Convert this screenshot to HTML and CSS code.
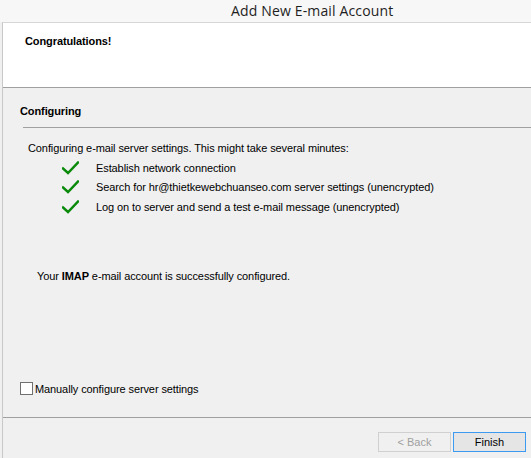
FILE: index.html
```html
<!DOCTYPE html>
<html>
<head>
<meta charset="utf-8">
<link rel="stylesheet" href="styles.css">
</head>
<body>
<div class="titlebar"><span class="title">Add New E-mail Account</span></div>
<div class="window">
  <div class="header">
    <div class="congrats">Congratulations!</div>
  </div>
  <div class="content">
    <div class="section-title">Configuring</div>
    <div class="rule"></div>
    <div class="desc">Configuring e-mail server settings. This might take several minutes:</div>
    <ul class="steps">
      <li><svg class="check" width="17" height="14" viewBox="0 0 17 14"><path d="M1 7.5 L6 12 L16 1.5" fill="none" stroke="#0a8a0a" stroke-width="2.4" stroke-linecap="square"/></svg><span>Establish network connection</span></li>
      <li><svg class="check" width="17" height="14" viewBox="0 0 17 14"><path d="M1 7.5 L6 12 L16 1.5" fill="none" stroke="#0a8a0a" stroke-width="2.4" stroke-linecap="square"/></svg><span>Search for hr@thietkewebchuanseo.com server settings (unencrypted)</span></li>
      <li><svg class="check" width="17" height="14" viewBox="0 0 17 14"><path d="M1 7.5 L6 12 L16 1.5" fill="none" stroke="#0a8a0a" stroke-width="2.4" stroke-linecap="square"/></svg><span>Log on to server and send a test e-mail message (unencrypted)</span></li>
    </ul>
    <div class="result">Your <b>IMAP</b> e-mail account is successfully configured.</div>
    <label class="manual"><span class="box"></span>Manually configure server settings</label>
  </div>
  <div class="footer">
    <button class="btn disabled">&lt; Back</button>
    <button class="btn primary">Finish</button>
  </div>
</div>
</body>
</html>
```
FILE: styles.css
```css
html, body {
  margin: 0;
  padding: 0;
  background: #f0f0f0;
  overflow: hidden;
}
body {
  width: 531px;
  height: 458px;
  font-family: "Liberation Sans", Arial, sans-serif;
  font-size: 11px;
  letter-spacing: -0.1px;
  color: #000;
}
.titlebar {
  height: 22px;
  background: #f7f7f7;
}
.title {
  display: block;
  padding-left: 231px;
  font-family: "Open Sans", "Noto Sans", sans-serif;
  font-size: 14px;
  letter-spacing: 0.15px;
  line-height: 21px;
  color: #1e1e1e;
}
.window {
  margin-left: 2px;
  border-left: 1px solid #c8c8c8;
  border-top: 1px solid #d6d6d6;
  height: 435px;
  display: flex;
  flex-direction: column;
}
.header {
  background: #fff;
  height: 64px;
  border-bottom: 1px solid #a0a0a0;
}
.congrats {
  font-weight: bold;
  padding: 11px 0 0 22px;
  line-height: 14px;
}
.content {
  flex: 1;
  padding-top: 16px;
  border-bottom: 1px solid #a0a0a0;
}
.section-title {
  font-weight: bold;
  padding-left: 17px;
  line-height: 14px;
}
.rule {
  margin: 9px 0 0 20px;
  border-top: 1px solid #a0a0a0;
}
.desc {
  margin-top: 13px;
  padding-left: 25px;
  line-height: 14px;
}
.steps {
  list-style: none;
  margin: 3px 0 0;
  padding: 0 0 0 59px;
}
.steps li {
  display: flex;
  align-items: center;
  height: 19.5px;
}
.check {
  flex: none;
  margin-right: 17px;
}
.result {
  margin-top: 52px;
  padding-left: 34px;
  line-height: 14px;
}
.manual {
  display: flex;
  align-items: center;
  margin-top: 99px;
  padding-left: 17px;
  line-height: 14px;
}
.box {
  width: 11px;
  height: 11px;
  border: 1px solid #707070;
  background: #fff;
  margin-right: 2px;
}
.footer {
  height: 40px;
  display: flex;
  justify-content: flex-end;
  align-items: flex-start;
  padding: 14px 5px 0 0;
  box-sizing: border-box;
  gap: 2px;
}
.btn {
  width: 73px;
  height: 20px;
  font-family: "Liberation Sans", Arial, sans-serif;
  font-size: 11px;
  padding: 0;
  border: 1px solid #adadad;
  background: #e1e1e1;
  color: #000;
}
.btn.disabled {
  border-color: #d0d0d0;
  background: #f0f0f0;
  color: #a0a0a0;
}
.btn.primary {
  border-color: #3c9bf0;
  background: #e5e5e5;
}
```
